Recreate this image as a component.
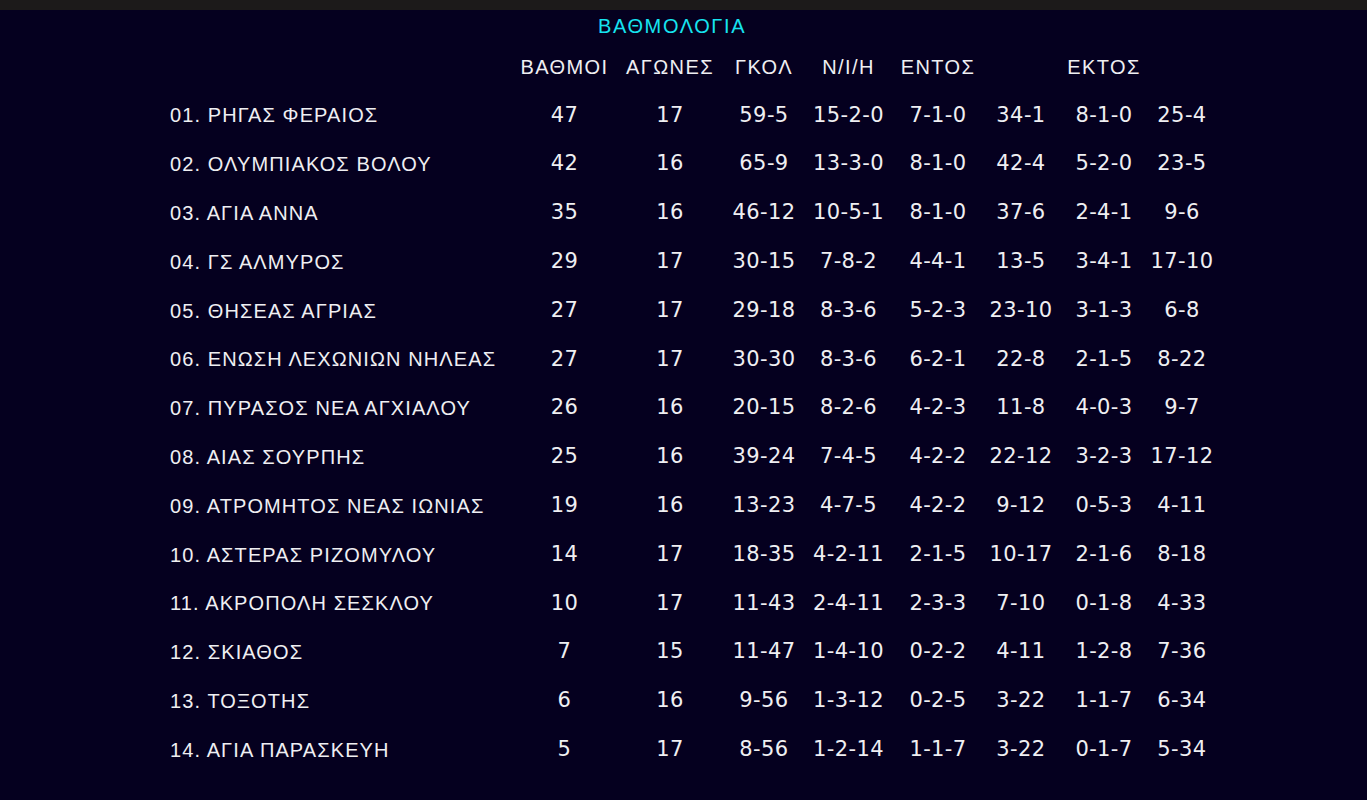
import React from "react";

type Row = {
  pos: string;
  name: string;
  points: number;
  played: number;
  goals: string;
  wdl: string;
  home: string;
  homeGoals: string;
  away: string;
  awayGoals: string;
};

const rows: Row[] = [
  { pos: "01.", name: "ΡΗΓΑΣ ΦΕΡΑΙΟΣ", points: 47, played: 17, goals: "59-5", wdl: "15-2-0", home: "7-1-0", homeGoals: "34-1", away: "8-1-0", awayGoals: "25-4" },
  { pos: "02.", name: "ΟΛΥΜΠΙΑΚΟΣ ΒΟΛΟΥ", points: 42, played: 16, goals: "65-9", wdl: "13-3-0", home: "8-1-0", homeGoals: "42-4", away: "5-2-0", awayGoals: "23-5" },
  { pos: "03.", name: "ΑΓΙΑ ΑΝΝΑ", points: 35, played: 16, goals: "46-12", wdl: "10-5-1", home: "8-1-0", homeGoals: "37-6", away: "2-4-1", awayGoals: "9-6" },
  { pos: "04.", name: "ΓΣ ΑΛΜΥΡΟΣ", points: 29, played: 17, goals: "30-15", wdl: "7-8-2", home: "4-4-1", homeGoals: "13-5", away: "3-4-1", awayGoals: "17-10" },
  { pos: "05.", name: "ΘΗΣΕΑΣ ΑΓΡΙΑΣ", points: 27, played: 17, goals: "29-18", wdl: "8-3-6", home: "5-2-3", homeGoals: "23-10", away: "3-1-3", awayGoals: "6-8" },
  { pos: "06.", name: "ΕΝΩΣΗ ΛΕΧΩΝΙΩΝ ΝΗΛΕΑΣ", points: 27, played: 17, goals: "30-30", wdl: "8-3-6", home: "6-2-1", homeGoals: "22-8", away: "2-1-5", awayGoals: "8-22" },
  { pos: "07.", name: "ΠΥΡΑΣΟΣ ΝΕΑ ΑΓΧΙΑΛΟΥ", points: 26, played: 16, goals: "20-15", wdl: "8-2-6", home: "4-2-3", homeGoals: "11-8", away: "4-0-3", awayGoals: "9-7" },
  { pos: "08.", name: "ΑΙΑΣ ΣΟΥΡΠΗΣ", points: 25, played: 16, goals: "39-24", wdl: "7-4-5", home: "4-2-2", homeGoals: "22-12", away: "3-2-3", awayGoals: "17-12" },
  { pos: "09.", name: "ΑΤΡΟΜΗΤΟΣ ΝΕΑΣ ΙΩΝΙΑΣ", points: 19, played: 16, goals: "13-23", wdl: "4-7-5", home: "4-2-2", homeGoals: "9-12", away: "0-5-3", awayGoals: "4-11" },
  { pos: "10.", name: "ΑΣΤΕΡΑΣ ΡΙΖΟΜΥΛΟΥ", points: 14, played: 17, goals: "18-35", wdl: "4-2-11", home: "2-1-5", homeGoals: "10-17", away: "2-1-6", awayGoals: "8-18" },
  { pos: "11.", name: "ΑΚΡΟΠΟΛΗ ΣΕΣΚΛΟΥ", points: 10, played: 17, goals: "11-43", wdl: "2-4-11", home: "2-3-3", homeGoals: "7-10", away: "0-1-8", awayGoals: "4-33" },
  { pos: "12.", name: "ΣΚΙΑΘΟΣ", points: 7, played: 15, goals: "11-47", wdl: "1-4-10", home: "0-2-2", homeGoals: "4-11", away: "1-2-8", awayGoals: "7-36" },
  { pos: "13.", name: "ΤΟΞΟΤΗΣ", points: 6, played: 16, goals: "9-56", wdl: "1-3-12", home: "0-2-5", homeGoals: "3-22", away: "1-1-7", awayGoals: "6-34" },
  { pos: "14.", name: "ΑΓΙΑ ΠΑΡΑΣΚΕΥΗ", points: 5, played: 17, goals: "8-56", wdl: "1-2-14", home: "1-1-7", homeGoals: "3-22", away: "0-1-7", awayGoals: "5-34" },
];

const cols = "grid grid-cols-[342px_105px_106px_82px_87px_92px_74px_92px_64px]";
const greek = "font-['Liberation_Sans',Arial,sans-serif]";
const nums = "font-['DejaVu_Sans',sans-serif] text-[21px] tracking-[0.4px] text-center";

export default function App() {
  return (
    <div className={`min-h-screen bg-[#05001f] text-[#efeff2] ${greek}`}>
      {/* top strip */}
      <div className="h-[10px] bg-[#1c1a1a]" />

      <div className="pl-[598px] pt-[4px] text-[20px] leading-[24px] tracking-[1.6px] text-[#16e4f0]">ΒΑΘΜΟΛΟΓΙΑ</div>

      <div className="pl-[170px]">
        {/* header */}
        <div className={`${cols} mt-[17px] h-[24px] items-center text-[20px] leading-[24px] tracking-[1.4px]`}>
          <div />
          <div className="text-center">ΒΑΘΜΟΙ</div>
          <div className="text-center">ΑΓΩΝΕΣ</div>
          <div className="text-center">ΓΚΟΛ</div>
          <div className="text-center">Ν/Ι/Η</div>
          <div className="text-center">ΕΝΤΟΣ</div>
          <div />
          <div className="text-center">ΕΚΤΟΣ</div>
          <div />
        </div>

        {/* rows */}
        <div className="mt-[12px]">
          {rows.map((r) => (
            <div key={r.pos} className={`${cols} h-[48.8px] items-center text-[20px]`}>
              <div className="whitespace-nowrap tracking-[1.1px]">
                {r.pos} {r.name}
              </div>
              <div className={nums}>{r.points}</div>
              <div className={nums}>{r.played}</div>
              <div className={nums}>{r.goals}</div>
              <div className={nums}>{r.wdl}</div>
              <div className={nums}>{r.home}</div>
              <div className={nums}>{r.homeGoals}</div>
              <div className={nums}>{r.away}</div>
              <div className={nums}>{r.awayGoals}</div>
            </div>
          ))}
        </div>
      </div>
    </div>
  );
}
